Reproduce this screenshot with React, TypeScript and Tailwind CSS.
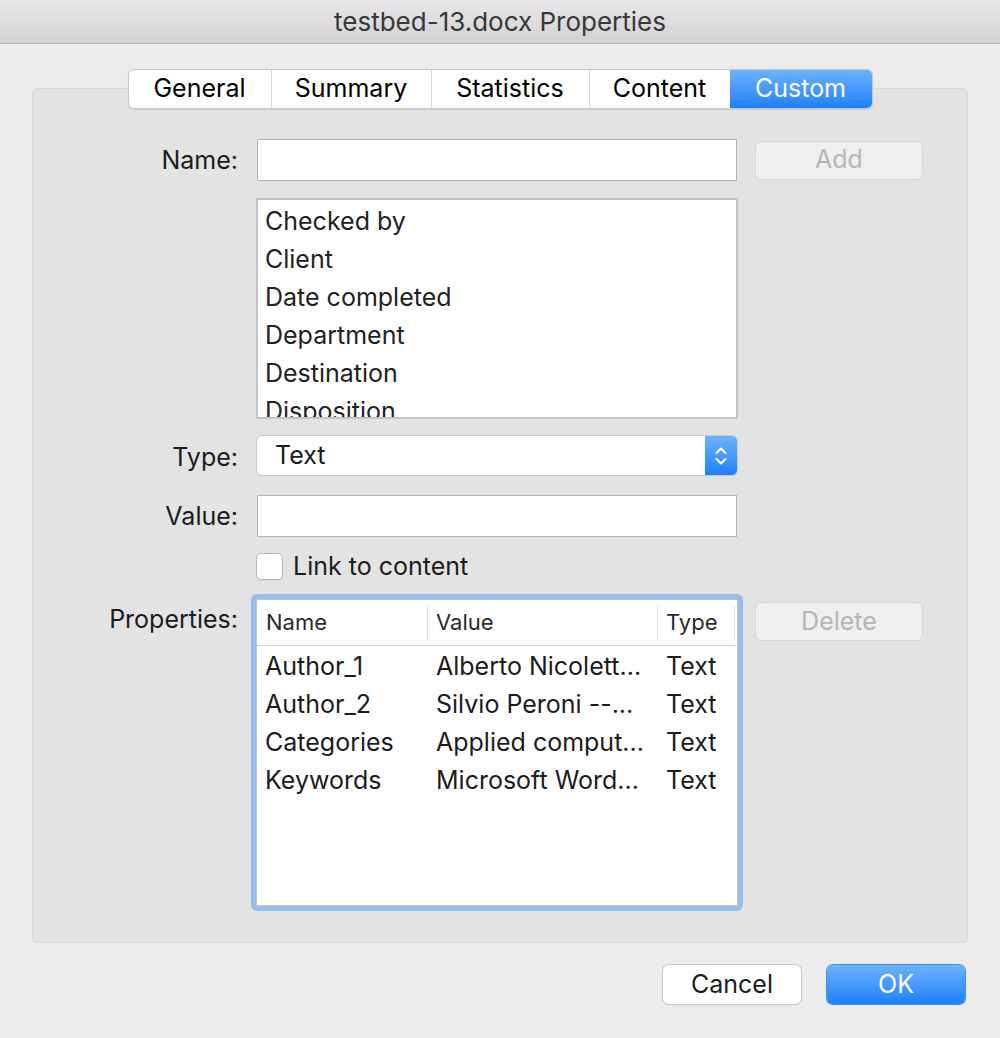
import React from 'react'

const tabs = ['General', 'Summary', 'Statistics', 'Content', 'Custom']

const names = ['Checked by', 'Client', 'Date completed', 'Department', 'Destination', 'Disposition']

const props = [
  { name: 'Author_1', value: 'Alberto Nicolett...', type: 'Text' },
  { name: 'Author_2', value: 'Silvio Peroni --...', type: 'Text' },
  { name: 'Categories', value: 'Applied comput...', type: 'Text' },
  { name: 'Keywords', value: 'Microsoft Word...', type: 'Text' },
]

function Label({ children, className = '' }: { children: React.ReactNode; className?: string }) {
  return (
    <div className={`w-[205px] shrink-0 text-right text-[25px] leading-[34px] text-[#1c1c1c] ${className}`}>{children}</div>
  )
}

function DisabledButton({ children }: { children: React.ReactNode }) {
  return (
    <div className="flex h-[39px] w-[168px] items-center justify-center rounded-[6px] border border-[#d6d6d6] bg-[#efefef] text-[25px] text-[#b5b5b5]">
      {children}
    </div>
  )
}

export default function App() {
  return (
    <div
      className="flex h-[1038px] w-[1000px] flex-col bg-[#ececec]"
      style={{ fontFamily: 'Inter, "Noto Sans", sans-serif' }}
    >
      <div className="flex h-[44px] shrink-0 items-center justify-center border-b border-[#b3b3b3] bg-gradient-to-b from-[#e9e7e9] to-[#d3d1d3] text-[26px] text-[#383838]">
        testbed-13.docx Properties
      </div>

      <div className="mx-[32px] mt-[44px] h-[855px] rounded-[6px] border border-[#d8d8d8] bg-[#e3e3e3]">
        {/* tabs */}
        <div className="-mt-[20px] flex justify-center">
          <div className="flex h-[40px] overflow-hidden rounded-[6px] border border-[#c6c6c6] bg-white shadow-[0_1px_1px_rgba(0,0,0,0.12)]">
            {tabs.map((t, i) => (
              <div
                key={t}
                className={
                  t === 'Custom'
                    ? 'flex w-[142px] items-center justify-center bg-gradient-to-b from-[#6cb2fa] to-[#1a80fb] text-[25px] text-white'
                    : `flex items-center justify-center text-[25px] text-black ${i > 0 ? 'border-l border-[#dcdcdc]' : ''} ${
                        ['w-[142px]', 'w-[160px]', 'w-[158px]', 'w-[141px]'][i]
                      }`
                }
              >
                {t}
              </div>
            ))}
          </div>
        </div>

        {/* Name */}
        <div className="mt-[30px] flex items-center">
          <Label>Name:</Label>
          <div className="ml-[19px] h-[42px] w-[480px] border border-[#b3b3b3] bg-white" />
          <div className="ml-[18px]">
            <DisabledButton>Add</DisabledButton>
          </div>
        </div>

        {/* name list */}
        <div className="mt-[17px] flex">
          <div className="w-[205px] shrink-0" />
          <div className="ml-[18px] h-[221px] w-[482px] overflow-hidden border-2 border-[#c4c4c4] bg-white pl-[7px] pt-[2px]">
            {names.map((n) => (
              <div key={n} className="h-[38px] text-[25px] leading-[38px] text-[#222]">
                {n}
              </div>
            ))}
          </div>
        </div>

        {/* Type */}
        <div className="mt-[17px] flex items-center">
          <Label className="pt-[3px]">Type:</Label>
          <div className="ml-[19px] flex h-[39px] w-[480px] overflow-hidden rounded-[5px] bg-white shadow-[0_0_0_1px_#c9c9c9,0_1px_1px_rgba(0,0,0,0.2)]">
            <div className="flex flex-1 items-center pl-[18px] text-[25px] text-[#1c1c1c]">Text</div>
            <div className="flex w-[32px] items-center justify-center bg-gradient-to-b from-[#6cb2fa] to-[#1a80fb]">
              <svg width="14" height="24" viewBox="0 0 14 24" fill="none" stroke="white" strokeWidth="2" strokeLinecap="round" strokeLinejoin="round">
                <path d="M2.5 9 L7 4.5 L11.5 9" />
                <path d="M2.5 15 L7 19.5 L11.5 15" />
              </svg>
            </div>
          </div>
        </div>

        {/* Value */}
        <div className="mt-[20px] flex items-center">
          <Label>Value:</Label>
          <div className="ml-[19px] h-[42px] w-[480px] border border-[#b3b3b3] bg-white" />
        </div>

        {/* Link to content */}
        <div className="mt-[16px] flex h-[27px] items-center">
          <div className="w-[205px] shrink-0" />
          <div className="ml-[18px] h-[27px] w-[27px] rounded-[5px] border border-[#b8b8b8] bg-white shadow-[0_1px_0_rgba(0,0,0,0.05)]" />
          <div className="ml-[10px] text-[25px] leading-[27px] text-[#1c1c1c]">Link to content</div>
        </div>

        {/* Properties */}
        <div className="mt-[19px] flex items-start">
          <Label className="pt-[3px]">Properties:</Label>
          <div className="ml-[18px] h-[307px] w-[482px] rounded-[2px] border border-[#c4c4c4] bg-white shadow-[0_0_0_5px_#96bfeb]">
            <div className="flex h-[46px] items-center border-b border-[#d6d6d6] text-[22px] text-[#2a2a2a]">
              <div className="flex h-[34px] w-[171px] items-center border-r border-[#dedede] pl-[9px]">Name</div>
              <div className="flex h-[34px] w-[230px] items-center border-r border-[#dedede] pl-[8px]">Value</div>
              <div className="flex h-[34px] w-[77px] items-center border-r border-[#dedede] pl-[8px]">Type</div>
            </div>
            <div className="pt-[2px]">
              {props.map((p) => (
                <div key={p.name} className="flex h-[38px] items-center text-[25px] text-[#1c1c1c]">
                  <div className="w-[171px] pl-[8px]">{p.name}</div>
                  <div className="w-[230px] whitespace-nowrap pl-[8px]">{p.value}</div>
                  <div className="pl-[8px]">{p.type}</div>
                </div>
              ))}
            </div>
          </div>
          <div className="ml-[17px] mt-[3px]">
            <DisabledButton>Delete</DisabledButton>
          </div>
        </div>
      </div>

      {/* footer buttons */}
      <div className="mr-[35px] mt-[22px] flex justify-end gap-[26px]">
        <div className="flex h-[39px] w-[138px] items-center justify-center rounded-[6px] bg-white text-[25px] text-[#1c1c1c] shadow-[0_0_0_1px_#c8c8c8,0_1px_1px_rgba(0,0,0,0.2)]">
          Cancel
        </div>
        <div className="flex h-[39px] w-[138px] items-center justify-center rounded-[6px] bg-gradient-to-b from-[#6cb2fa] to-[#1a80fb] text-[25px] text-white shadow-[0_0_0_1px_#3d8ff0,0_1px_1px_rgba(0,0,0,0.15)]">
          OK
        </div>
      </div>
    </div>
  )
}
